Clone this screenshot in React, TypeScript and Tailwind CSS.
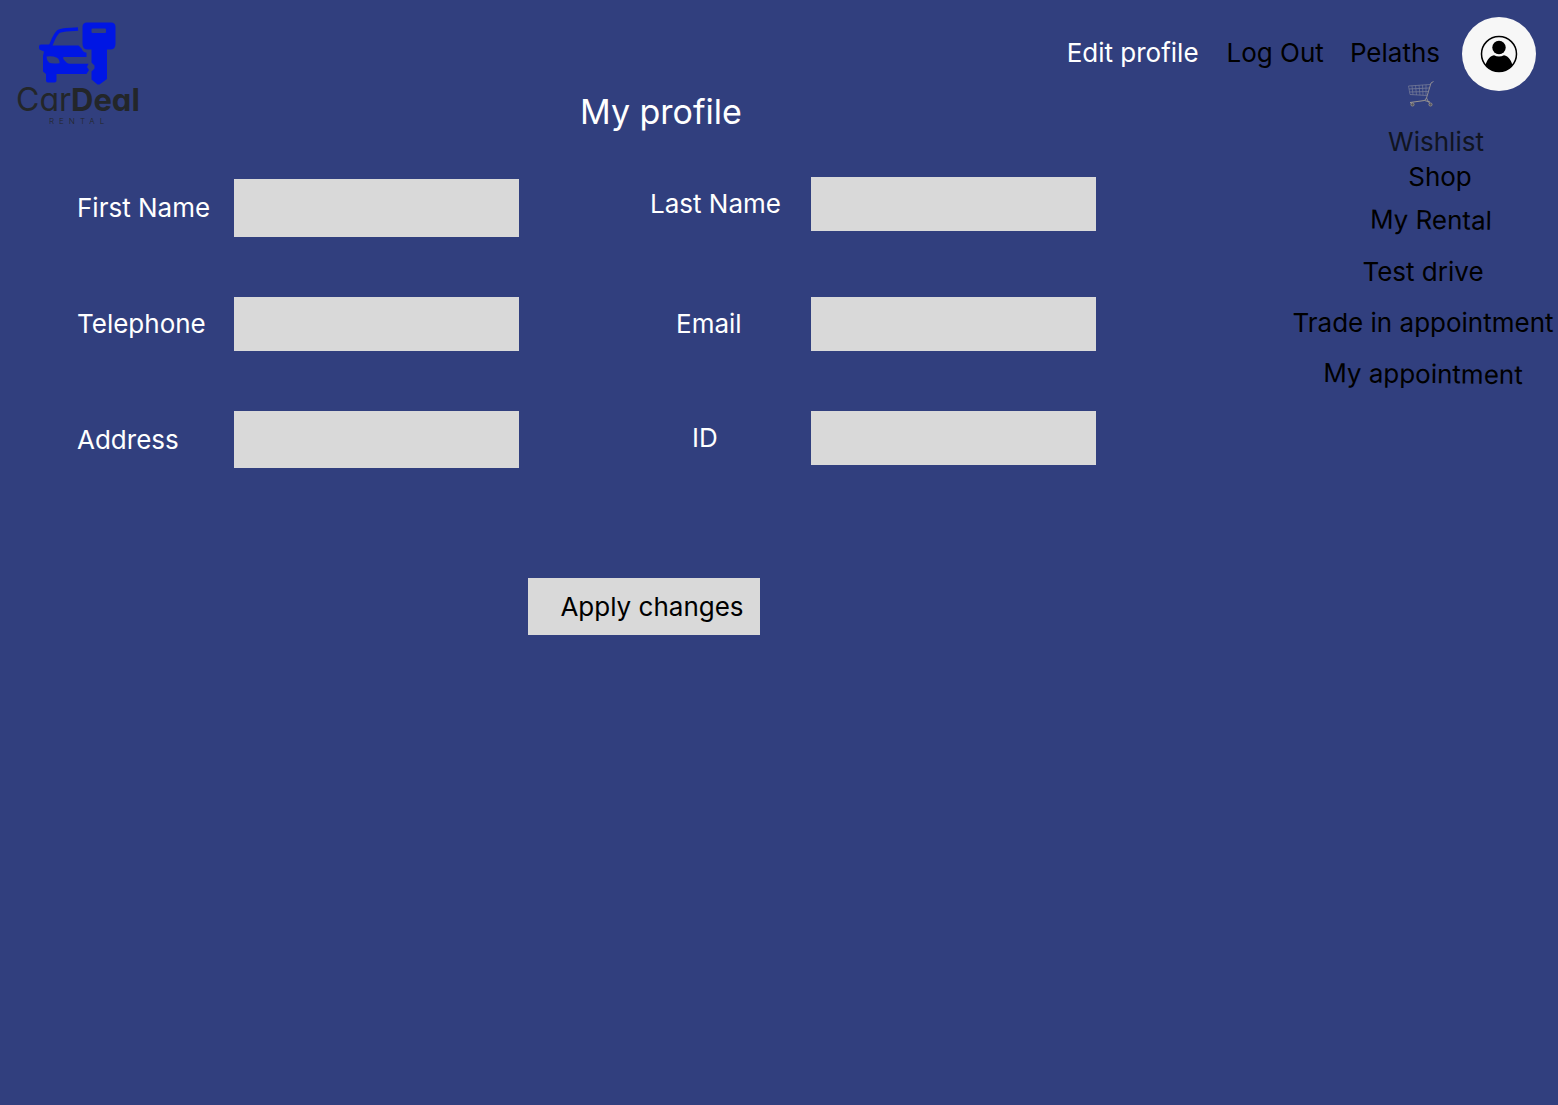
import React from "react";

type FieldProps = {
  id: string;
  label: string;
  type?: string;
  labelClass: string;
  inputClass: string;
  rowClass?: string;
};

function Field({ id, label, type = "text", labelClass, inputClass, rowClass = "" }: FieldProps) {
  return (
    <div className={`flex min-w-0 items-center ${rowClass}`}>
      <label htmlFor={id} className={`shrink-0 whitespace-nowrap text-white ${labelClass}`}>
        {label}
      </label>
      <input
        id={id}
        type={type}
        className={`w-0 min-w-0 flex-1 bg-[#d9d9d9] px-3 text-black outline-none ${inputClass}`}
      />
    </div>
  );
}

function Logo() {
  return (
    <a href="#home" aria-label="CarDeal Rental" className="block w-32 text-[#232629]">
      <svg viewBox="38 21 78 65" className="ml-[22px] block h-[65px] w-[78px]" aria-hidden="true">
        <path
          d="M50.500 46C53 40 55 34 58.500 31.500C62 29.300 68 29.800 78 29"
          fill="none"
          stroke="#0016e4"
          strokeWidth="3.400"
        />
        <path
          fill="#0016e4"
          fillRule="evenodd"
          d="M39 46.500Q39 44.500 41 44.500H49.500L51 45.500H78.500C80.500 47 81.500 48.500 82.500 50.500Q83.500 52.200 86.500 52.800V57H64Q63 57 63 58.200Q64 60.500 66.500 62.500Q68 63.800 70 63.800H88.500L87 67L89 70L86.500 74H56.500V80.500Q56.500 82.500 54.500 82.500H48Q46 82.500 46 80.500V74L43 71.500V56L44 51.500L40.500 50Q39 49.500 39 48ZM46.500 56.500Q46.500 60.500 49 62.500Q51 64 59.500 63.300Q60 59.500 56.500 57.500Q52 55.500 46.500 56.500Z"
        />
        <path
          fill="#0016e4"
          fillRule="evenodd"
          d="M87 22.500H111Q115.500 22.500 115.500 27V44Q115.500 49.500 110 49.500H107V79L99.500 84.500H97.500L91.500 79.500V71.500L94.500 68.500V65.500L91.500 62.500V49.500H88Q82.500 49.500 82.500 44V27Q82.500 22.500 87 22.500ZM92.500 28.500Q91.500 28.500 91.500 29.500V32Q91.500 33 92.500 33H105Q106 33 106 32V29.500Q106 28.500 105 28.500Z"
        />
      </svg>
      <span className="block text-[31px] leading-[28px] whitespace-nowrap [font-feature-settings:'cv11']">
        <span className="text-[32px]">Car</span>
        <span className="font-bold">Deal</span>
      </span>
      <span className="block pl-[33px] text-[8px] leading-[14px] font-light tracking-[5px]">RENTAL</span>
    </a>
  );
}

function CartIcon() {
  return (
    <svg viewBox="0 0 26 26" className="h-[26px] w-[26px]" fill="none" aria-hidden="true">
      <path d="M25.500 0.500L23 2L18.500 17L20 20L22 23" stroke="#8f8c93" strokeWidth="1" />
      <path d="M0.500 5L22 3.500M1 8L21 7M1.500 11L20.500 10.500M2 13.500L19 14.500" stroke="#767b98" strokeWidth="0.800" />
      <path d="M0.500 5L2 13.500M4 4.800L5 13.800M7.500 4.500L8.500 14M11 4.200L12 14.200M14.500 4L15 14.400M18 3.800V14.400" stroke="#767b98" strokeWidth="0.700" />
      <path d="M18.500 17L16.500 19.500L2 21.500L4 22.500M16.500 19.500L22 21" stroke="#9a9590" strokeWidth="1" />
      <circle cx="4.500" cy="23.500" r="1.600" fill="#55575f" stroke="#a29a90" strokeWidth="0.700" />
      <circle cx="22.500" cy="23.500" r="1.600" fill="#55575f" stroke="#a29a90" strokeWidth="0.700" />
    </svg>
  );
}

function Avatar() {
  return (
    <svg viewBox="0 0 74 74" className="h-[74px] w-[74px]" aria-hidden="true">
      <defs>
        <clipPath id="avatar-ring">
          <circle cx="37" cy="37" r="17.500" />
        </clipPath>
      </defs>
      <circle cx="37" cy="37" r="37" fill="#f7f7f7" />
      <circle cx="37" cy="37" r="17.500" fill="none" stroke="#000" strokeWidth="1.500" />
      <circle cx="37" cy="30.500" r="6.700" fill="#000" />
      <path
        clipPath="url(#avatar-ring)"
        fill="#000"
        d="M23 56V51C24 43.500 27.500 39 32 38.200Q37 40.800 42 38.200C46.500 39 50 43.500 51 51V56Z"
      />
    </svg>
  );
}

const menu = [
  { label: "Wishlist", className: "h-[35px] pl-[26px] text-[#101420]" },
  { label: "Shop", className: "h-[35px] pl-[34px]" },
  { label: "My Rental", className: "h-[52px] pl-4 rotate-[0.6deg]" },
  { label: "Test drive", className: "h-[51px]" },
  { label: "Trade in appointment", className: "h-[51px]" },
  { label: "My appointment", className: "h-[52px] rotate-[0.6deg]" },
];

export default function App() {
  return (
    <div className="flex min-h-screen flex-col bg-[#313f7e] font-['Inter',sans-serif] text-[26px] leading-8 text-black">
      <header className="flex h-[124px] items-start pr-[22px] pl-4">
        <div className="w-32 shrink-0 pt-[21px]">
          <Logo />
        </div>
        <h1 className="flex-1 pt-[90px] pl-[436px] text-[34px] leading-[44px] whitespace-nowrap text-white">
          My profile
        </h1>
        <div className="flex shrink-0 pt-[17px]">
          <div className="flex flex-col">
            <nav className="flex pt-5 whitespace-nowrap">
              <a href="#edit" className="mr-7 text-white">Edit profile</a>
              <a href="#logout" className="mr-[26px]">Log Out</a>
              <a href="#customer" className="mr-[22px]">Pelaths</a>
            </nav>
            <a href="#cart" aria-label="Cart" className="mt-3 mr-7 self-end">
              <CartIcon />
            </a>
          </div>
          <a href="#account" aria-label="Account" className="block">
            <Avatar />
          </a>
        </div>
      </header>

      <div className="flex flex-1">
        <form className="min-w-0 flex-1" onSubmit={(e: React.FormEvent) => e.preventDefault()}>
          <div className="grid grid-cols-[minmax(0,442fr)_minmax(0,446fr)] gap-x-[131px] pt-[53px] pr-48 pl-[77px]">
            <div className="flex flex-col gap-[60px] pt-0.5">
              <Field id="first-name" label="First Name" labelClass="w-[157px]" inputClass="h-[58px]" />
              <Field id="telephone" label="Telephone" type="tel" labelClass="w-[157px]" inputClass="h-[54px]" />
              <Field id="address" label="Address" labelClass="w-[157px]" inputClass="h-[57px]" />
            </div>
            <div className="flex flex-col gap-[60px]">
              <Field id="last-name" label="Last Name" labelClass="w-[161px]" inputClass="h-[54px]" rowClass="mb-1.5" />
              <Field id="email" label="Email" type="email" labelClass="w-[161px] pl-[26px]" inputClass="h-[54px]" />
              <Field id="identity" label="ID" labelClass="w-[161px] pl-[42px]" inputClass="h-[54px]" />
            </div>
          </div>
          <button type="submit" className="mx-auto mt-[110px] block h-[57px] bg-[#d9d9d9] pr-4 pl-8 whitespace-nowrap">
            Apply changes
          </button>
        </form>

        <aside className="w-[270px] shrink-0">
          <nav className="flex flex-col">
            {menu.map((item) => (
              <a
                key={item.label}
                href="#menu"
                className={`flex items-center justify-center whitespace-nowrap ${item.className}`}
              >
                {item.label}
              </a>
            ))}
          </nav>
        </aside>
      </div>
    </div>
  );
}
